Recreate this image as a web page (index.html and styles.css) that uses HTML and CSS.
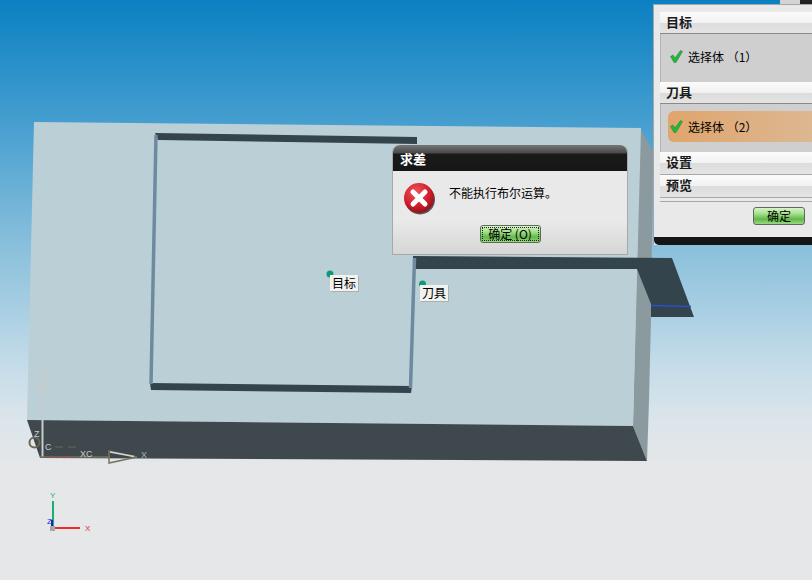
FILE: index.html
```html
<!DOCTYPE html>
<html lang="zh-CN">
<head>
  <meta charset="UTF-8" />
  <title>求差</title>
  <link rel="stylesheet" href="styles.css">
</head>
<body>
  <div class="viewport">
    <!-- 3D model -->
    <svg class="scene" width="812" height="580" viewBox="0 0 812 580">
      <polygon fill="#8b9a9e" points="640,128 653,152 651,317 649,400 647,461 633,426" />
      <polygon fill="#bbd0d6" points="34,122 641,128 633,426 27,420" />
      <polygon fill="#3f484c" points="27,420 633,426 647,461 40,458" />
      <polygon fill="#34444c" points="413,256 672,258 694,317 651,317 651,304 637,269 413,269" />
      <line x1="651" y1="305.500" x2="691" y2="306.500" stroke="#2a4fc8" stroke-width="1.500" />

      <polygon fill="#34444c" points="155,133 417,137 417,144 158,140" />
      <polygon fill="#34444c" points="150,383 412,386 411,393 151,390" />
      <line x1="156" y1="135" x2="151" y2="384" stroke="#6f8a9e" stroke-width="3.500" />
      <line x1="414.500" y1="258" x2="410.500" y2="388" stroke="#6f8a9e" stroke-width="3.500" />

      <!-- work coordinate triad -->
      <g class="triad" fill="none">
        <line x1="42.500" y1="388" x2="42.500" y2="457" stroke="#c6cbcc" stroke-width="2" />
        <polygon points="43,365 38,388 48,388" stroke="#c6cbcc" stroke-width="2" />
        <circle cx="34.500" cy="442.500" r="5" stroke="#6a6850" stroke-width="2" />
        <line x1="40" y1="457" x2="110" y2="457" stroke="#77725c" stroke-width="1.500" />
        <line x1="47" y1="457" x2="76" y2="457" stroke="#c23a34" stroke-width="1" stroke-dasharray="3 5" />
        <line x1="55" y1="447" x2="80" y2="447" stroke="#6a6850" stroke-width="1" stroke-dasharray="8 5" />
        <polygon points="109,451 137,457 109,463" stroke="#77725c" stroke-width="1.500" />
        <line x1="110" y1="452" x2="134" y2="456.500" stroke="#d6d8d8" stroke-width="1.500" />
        <text x="34" y="437" class="axis-text" fill="#c9cccc">Z</text>
        <text x="45" y="450" class="axis-text" fill="#c9cccc">C</text>
        <text x="80" y="457" class="axis-text" fill="#c9cccc">XC</text>
        <text x="141" y="458" class="axis-text" fill="#a9acac">X</text>
      </g>

      <!-- view triad -->
      <rect x="52" y="501" width="2" height="27" fill="#18b070" />
      <rect x="53" y="527" width="27" height="2" fill="#f02a2a" />
      <rect x="51" y="520" width="2" height="8" fill="#2020d0" />
      <rect x="50" y="526" width="5" height="5" fill="#a8a8a8" />
      <text x="50" y="498" class="axis-small" fill="#18b070">Y</text>
      <text x="85" y="531" class="axis-small" fill="#e02a2a">X</text>
      <text x="47" y="524" class="axis-small" fill="#2020d0">Z</text>

      <circle cx="330" cy="274" r="3.500" fill="#0e9a78" />
      <circle cx="422.500" cy="284" r="3.500" fill="#0e9a78" />
    </svg>

    <span class="tag tag-target">目标</span>
    <span class="tag tag-tool">刀具</span>

    <!-- error dialog -->
    <div class="dialog">
      <div class="dialog-title">求差</div>
      <div class="dialog-body">
        <div class="dialog-message">
          <svg class="error-icon" width="32" height="33" viewBox="0 0 32 33">
            <defs>
              <radialGradient id="errRed" cx="40%" cy="30%" r="75%">
                <stop offset="0" stop-color="#f0575c" />
                <stop offset="0.6" stop-color="#d11f2b" />
                <stop offset="1" stop-color="#8a0f18" />
              </radialGradient>
            </defs>
            <circle cx="17" cy="17.500" r="15" fill="#555" />
            <circle cx="16" cy="16" r="15" fill="url(#errRed)" />
            <path d="M10 10 L22 22 M22 10 L10 22" stroke="#fff" stroke-width="5" stroke-linecap="round" />
          </svg>
          <span class="dialog-text">不能执行布尔运算。</span>
        </div>
        <div class="dialog-actions">
          <button class="green-btn green-btn-focus">确定 (O)</button>
        </div>
      </div>
    </div>

    <!-- window behind the panel, only its lower edge shows -->
    <div class="back-window"></div>

    <!-- side panel -->
    <div class="panel">
      <div class="panel-inner">
        <div class="panel-head">目标</div>
        <div class="panel-group">
          <div class="select-row">
            <svg class="check" width="13" height="13" viewBox="0 0 13 13"><path d="M0.500 6.500 L3 5 L5 8 L10.500 0.500 L12.500 1.500 L6 12.500 L4 12.500 Z" fill="#1fb83a" stroke="#2a7a3a" stroke-width="0.500" /></svg>
            <span>选择体 （1）</span>
          </div>
        </div>
        <div class="panel-head">刀具</div>
        <div class="panel-group">
          <div class="select-row select-row-active">
            <svg class="check" width="13" height="13" viewBox="0 0 13 13"><path d="M0.500 6.500 L3 5 L5 8 L10.500 0.500 L12.500 1.500 L6 12.500 L4 12.500 Z" fill="#1fb83a" stroke="#2a7a3a" stroke-width="0.500" /></svg>
            <span>选择体 （2）</span>
          </div>
        </div>
        <div class="panel-head panel-head-closed">设置</div>
        <div class="panel-head panel-head-closed">预览</div>
        <div class="panel-actions">
          <button class="green-btn">确定</button>
        </div>
      </div>
      <div class="panel-foot"></div>
    </div>
  </div>
</body>
</html>
```

FILE: styles.css
```css
* {
  box-sizing: border-box;
  margin: 0;
  padding: 0;
}

body {
  width: 812px;
  height: 580px;
  overflow: hidden;
  font-family: "Noto Sans CJK SC", "Liberation Sans", sans-serif;
  font-size: 12px;
  color: #000;
}

.viewport {
  position: relative;
  width: 812px;
  height: 580px;
  overflow: hidden;
  background: linear-gradient(180deg, #0a80c2 0, #3f9bce 110px, #86bedb 240px, #c6dde9 370px, #dbe5ea 420px, #e6e7e9 470px);
}

.scene {
  position: absolute;
  left: 0;
  top: 0;
}

.axis-text {
  font-family: "Liberation Sans", sans-serif;
  font-size: 9px;
}

.axis-small {
  font-family: "Liberation Sans", sans-serif;
  font-size: 8px;
}

.tag {
  position: absolute;
  width: 28px;
  height: 16px;
  background: #f1f1ee;
  box-shadow: 1px 1px 0 #a9b0b0;
  line-height: 16px;
  text-align: center;
}

.tag-target {
  left: 330px;
  top: 275px;
}

.tag-tool {
  left: 420px;
  top: 285px;
}

/* dialog */
.dialog {
  position: absolute;
  left: 392px;
  top: 145px;
  width: 236px;
  height: 110px;
  display: flex;
  flex-direction: column;
  background: #e8e8e8;
  border: 1px solid #a8a8a8;
  border-top: 0;
  border-radius: 7px 7px 0 0;
}

.dialog-title {
  height: 26px;
  padding: 5px 0 0 7px;
  background: linear-gradient(180deg, #767676 0, #4a4a4a 8px, #1a1a1a 9px, #161616 100%);
  border-radius: 7px 7px 0 0;
  color: #fff;
  font-size: 13px;
  font-weight: 700;
  line-height: 18px;
}

.dialog-body {
  flex: 1;
  display: flex;
  flex-direction: column;
  padding: 11px 3px 4px;
  background: linear-gradient(180deg, #e9e9e9 0, #e9e9e9 60%, #d6d6d6 100%);
}

.dialog-message {
  display: flex;
  align-items: flex-start;
  gap: 14px;
  padding-left: 7px;
}

.error-icon {
  flex: none;
}

.dialog-text {
  margin-top: 2px;
}

.dialog-actions {
  display: flex;
  justify-content: center;
  margin-top: 10px;
}

.green-btn {
  width: 52px;
  height: 18px;
  border: 1px solid #5d6b5d;
  border-radius: 3px;
  background: linear-gradient(180deg, #d8f4c8 0, #a8e090 35%, #62b848 70%, #9ad884 100%);
  font-family: inherit;
  font-size: 12px;
  line-height: 14px;
  color: #000;
}

.green-btn-focus {
  width: 61px;
  outline: 1px dotted #1c2a1c;
  outline-offset: -3px;
}

/* panel */
.back-window {
  position: absolute;
  left: 780px;
  top: 0;
  width: 32px;
  height: 4px;
  background: linear-gradient(90deg, #d4d4d4 0, #d4d4d4 20px, #222 20px);
}

.panel {
  position: absolute;
  left: 653px;
  top: 4px;
  width: 165px;
  height: 241px;
  display: flex;
  flex-direction: column;
  background: #e9e9e9;
  border: 1px solid #a6a6a6;
  border-bottom: 0;
  border-right: 0;
}

.panel-inner {
  flex: 1;
  padding: 7px 0 0 6px;
}

.panel-head {
  height: 22px;
  padding-left: 6px;
  background: linear-gradient(180deg, #fbfbfb 0, #f2f2f2 50%, #dcdcdc 51%, #e4e4e4 100%);
  border-bottom: 1px solid #8a8a8a;
  font-size: 13px;
  font-weight: 700;
  line-height: 20px;
  color: #1a1a1a;
}

.panel-head-closed {
  height: 23px;
  border-bottom-color: #a8a8a8;
}

.panel-group {
  height: 48px;
  display: flex;
  align-items: center;
  padding: 0 0 3px 7px;
  background: #cfcfcf;
  border-left: 1px solid #b4b4b4;
}

.select-row {
  flex: 1;
  height: 31px;
  display: flex;
  align-items: center;
  gap: 5px;
  padding-left: 2px;
  border-radius: 6px 0 0 6px;
  line-height: 31px;
}

.select-row-active {
  background: linear-gradient(90deg, #e0a56c 0, #dcb893 100%);
}

.panel-actions {
  display: flex;
  height: 34px;
  padding: 5px 0 0 93px;
  border-top: 1px solid #a8a8a8;
  margin-top: 3px;
}

.panel-foot {
  height: 8px;
  background: #151515;
  border-radius: 0 0 0 5px;
}
```
